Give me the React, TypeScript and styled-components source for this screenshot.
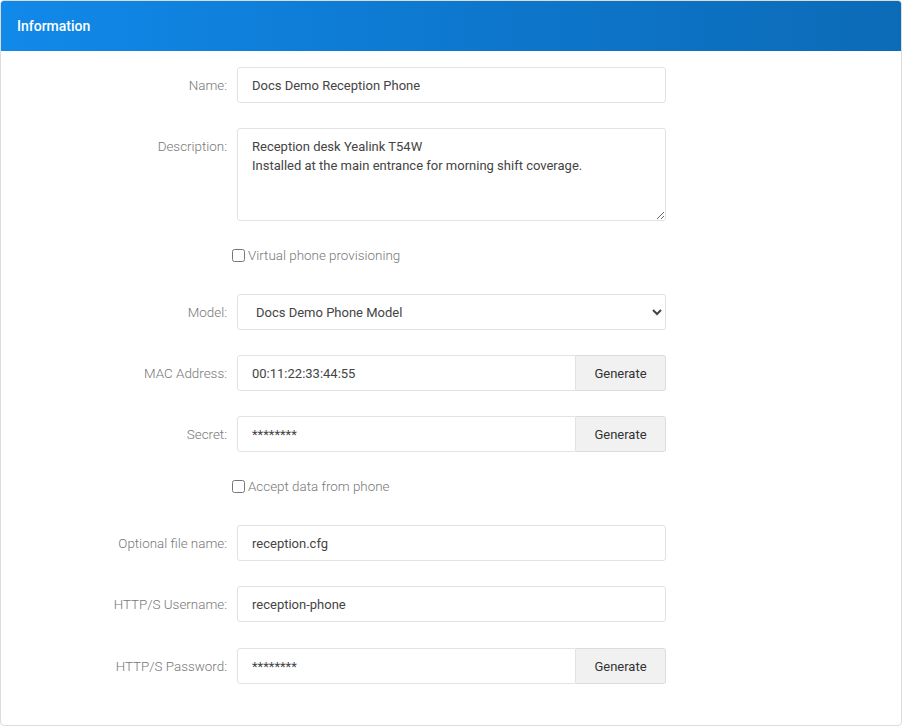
import React from "react";
import styled, { createGlobalStyle } from "styled-components";

const Global = createGlobalStyle`
  html, body { margin: 0; padding: 0; background: #fff; }
  body { font-family: Roboto, "Noto Sans", sans-serif; font-size: 13px; color: #333; }
  * { box-sizing: border-box; }
`;

interface Field {
  label: string;
  value: string;
  generate?: boolean;
  last?: boolean;
}

const Styled = {
  Card: styled.div`
    margin: 0 1px 0 0;
    width: 902px;
    height: 726px;
    border: 1px solid #dcdcdc;
    border-radius: 4px;
    overflow: hidden;
    background: #fff;
  `,
  Header: styled.div`
    height: 50px;
    display: flex;
    align-items: center;
    padding: 0 16px;
    color: #fff;
    font-weight: 500;
    font-size: 14px;
    background: linear-gradient(90deg, #1189e9 0%, #0d78cf 50%, #0c6bb7 100%);
  `,
  Body: styled.div`
    padding: 16px 0 16px;
  `,
  Row: styled.div<{ $tall?: boolean; $last?: boolean }>`
    display: grid;
    grid-template-columns: 227px 429px;
    column-gap: 9px;
    align-items: ${(p) => (p.$tall ? "start" : "center")};
    margin-bottom: ${(p) => (p.$last ? "0" : "25px")};
    margin-top: ${(p) => (p.$last ? "26px" : "0")};
  `,
  Label: styled.label<{ $tall?: boolean }>`
    text-align: right;
    padding-right: 1px;
    color: #777;
    font-weight: 300;
    font-size: 13.4px;
    padding-top: ${(p) => (p.$tall ? "11px" : "0")};
  `,
  Group: styled.div`
    display: flex;
  `,
  Input: styled.input<{ $joined?: boolean }>`
    flex: 1;
    height: 36px;
    min-width: 0;
    padding: 0 14px;
    border: 1px solid #e2e2e2;
    border-radius: ${(p) => (p.$joined ? "3px 0 0 3px" : "3px")};
    font: inherit;
    color: #444;
    outline: none;
  `,
  Button: styled.button`
    width: 90px;
    height: 36px;
    border: 1px solid #dcdcdc;
    border-left: 0;
    border-radius: 0 3px 3px 0;
    background: #f1f1f1;
    font: inherit;
    color: #333;
  `,
  TextArea: styled.textarea`
    height: 93px;
    padding: 8px 14px;
    border: 1px solid #e2e2e2;
    border-radius: 3px;
    font: inherit;
    line-height: 19px;
    color: #444;
    resize: vertical;
    outline: none;
  `,
  Select: styled.select`
    height: 36px;
    padding: 0 14px;
    border: 1px solid #e2e2e2;
    border-radius: 3px;
    background: #fff;
    font: inherit;
    color: #444;
    outline: none;
  `,
  CheckRow: styled.label`
    display: flex;
    align-items: center;
    gap: 3px;
    margin: 0 0 30px 231px;
    height: 18px;
    color: #777;
    font-weight: 300;
    font-size: 13.4px;
    input { margin: 0; width: 13px; height: 13px; }
  `,
};

const Text = ({ label, value, generate, last }: Field) => (
  <Styled.Row $last={last}>
    <Styled.Label>{label}</Styled.Label>
    <Styled.Group>
      <Styled.Input $joined={generate} defaultValue={value} />
      {generate && <Styled.Button>Generate</Styled.Button>}
    </Styled.Group>
  </Styled.Row>
);

export default function App() {
  return (
    <>
      <Global />
      <Styled.Card>
        <Styled.Header>Information</Styled.Header>
        <Styled.Body>
          <Text label="Name:" value="Docs Demo Reception Phone" />
          <Styled.Row $tall>
            <Styled.Label $tall>Description:</Styled.Label>
            <Styled.TextArea
              defaultValue={
                "Reception desk Yealink T54W\nInstalled at the main entrance for morning shift coverage."
              }
            />
          </Styled.Row>
          <Styled.CheckRow>
            <input type="checkbox" />
            Virtual phone provisioning
          </Styled.CheckRow>
          <Styled.Row>
            <Styled.Label>Model:</Styled.Label>
            <Styled.Select defaultValue="m">
              <option value="m">Docs Demo Phone Model</option>
            </Styled.Select>
          </Styled.Row>
          <Text label="MAC Address:" value="00:11:22:33:44:55" generate />
          <Text label="Secret:" value="********" generate />
          <Styled.CheckRow>
            <input type="checkbox" />
            Accept data from phone
          </Styled.CheckRow>
          <Text label="Optional file name:" value="reception.cfg" />
          <Text label="HTTP/S Username:" value="reception-phone" />
          <Text label="HTTP/S Password:" value="********" generate last />
        </Styled.Body>
      </Styled.Card>
    </>
  );
}
